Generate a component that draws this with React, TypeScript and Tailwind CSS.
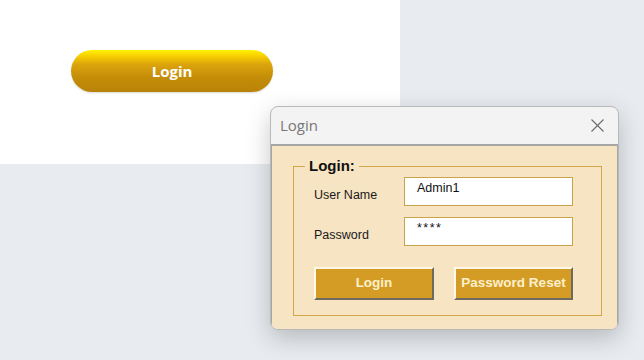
import React from "react";

const sans = { fontFamily: '"Liberation Sans", Arial, sans-serif' };

function GoldButton() {
  return (
    <button
      className="flex h-[42px] w-[202px] items-center justify-center rounded-full bg-[linear-gradient(to_bottom,#fff200_0%,#f8d000_14%,#dca40c_34%,#c48d08_65%,#b88308_100%)] text-[15px] font-bold text-white shadow-[0_1px_2px_rgba(0,0,0,0.15)]"
      style={{ fontFamily: '"Open Sans", sans-serif' }}
    >
      Login
    </button>
  );
}

function Field({ label, value, secret }: { label: string; value: string; secret?: boolean }) {
  return (
    <div className="flex items-center">
      <span className="mt-[8px] w-[90px] text-[12.5px] text-[#1a1a1a]">{label}</span>
      <div
        className={`h-[29px] w-[169px] border border-[#c9a24a] bg-white pl-[12px] pt-[2px] text-[12.5px] leading-[16px] text-[#111] ${secret ? "tracking-[1.5px]" : ""}`}
      >
        {value}
      </div>
    </div>
  );
}

function BevelButton({ children, width }: { children: React.ReactNode; width: string }) {
  return (
    <button
      className={`${width} flex h-[33px] items-center justify-center border-2 border-b-[#6e6a60] border-l-[#fff8e6] border-r-[#6e6a60] border-t-[#fff8e6] bg-[#d49c24] text-[13.5px] font-bold text-[#fdf0cc]`}
    >
      {children}
    </button>
  );
}

function LoginDialog() {
  return (
    <div
      className="absolute left-[270px] top-[106px] flex h-[224px] w-[349px] flex-col overflow-hidden rounded-[8px] border border-[#b9b9b9] bg-[#f3f3f3] shadow-[0_8px_24px_rgba(0,0,0,0.22)]"
      style={sans}
    >
      <div className="flex h-[37px] shrink-0 items-center justify-between pl-[9px] pr-[14px]">
        <span className="text-[15px] text-[#777777]" style={{ fontFamily: '"Open Sans", sans-serif' }}>
          Login
        </span>
        <svg width="13" height="13" viewBox="0 0 13 13" className="text-[#6a6a6a]">
          <path d="M0.5 0.5L12.5 12.5M12.5 0.5L0.5 12.5" stroke="currentColor" strokeWidth="1.1" />
        </svg>
      </div>
      <div className="mb-[1px] flex-1 border-x border-t-2 border-[#a6a6a6] bg-[#f6e4c3] pb-[13px] pl-[21px] pr-[15px] pt-[20px]">
        <div className="relative flex h-[150px] flex-col border border-[#d3a64a] pl-[20px] pt-[10px]">
          <span className="absolute left-[11px] top-[-10px] bg-[#f6e4c3] px-[4px] text-[15px] font-bold leading-[18px] text-[#111]">
            Login:
          </span>
          <div className="flex flex-col gap-[11px]">
            <Field label="User Name" value="Admin1" />
            <Field label="Password" value="****" secret />
          </div>
          <div className="mt-[21px] flex gap-[20px]">
            <BevelButton width="w-[120px]">Login</BevelButton>
            <BevelButton width="w-[119px]">Password Reset</BevelButton>
          </div>
        </div>
      </div>
    </div>
  );
}

export default function App() {
  return (
    <div className="relative h-[360px] w-[644px] overflow-hidden bg-[#e8ecf0]">
      <div className="h-[164px] w-[400px] bg-white pl-[71px] pt-[50px]">
        <GoldButton />
      </div>
      <LoginDialog />
    </div>
  );
}
